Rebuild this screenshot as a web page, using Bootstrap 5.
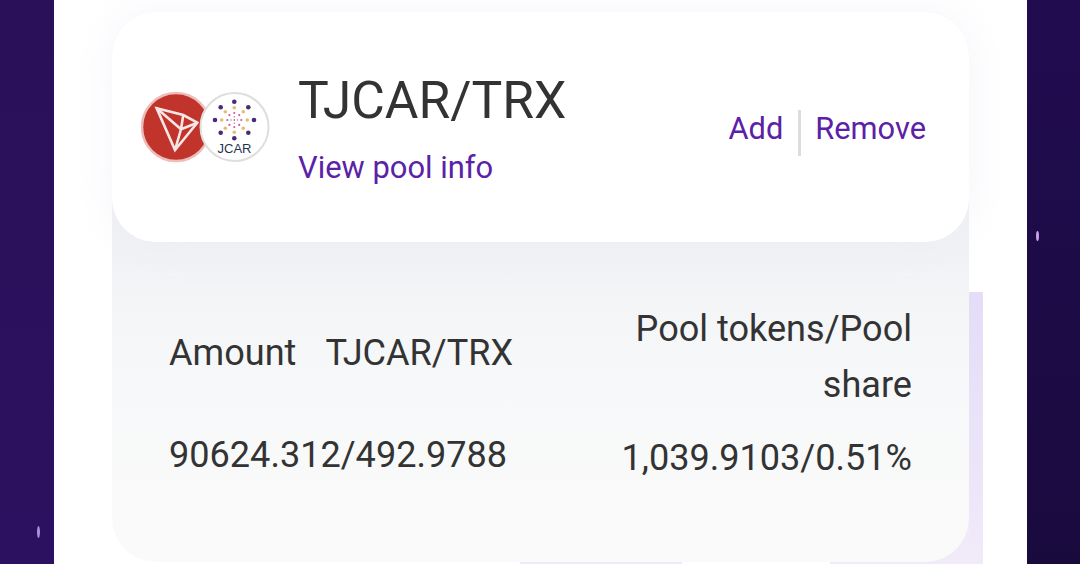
<!DOCTYPE html>
<html lang="en">
<head>
<meta charset="utf-8">
<title>TJCAR/TRX pool</title>
<link href="https://cdn.jsdelivr.net/npm/bootstrap@5.3.0/dist/css/bootstrap.min.css" rel="stylesheet">
<style>
html,body{height:564px;overflow:hidden}
body{font-family:Roboto,sans-serif;background:#fff;color:#333}
.stage{height:564px}
.side-l{width:54px;background:linear-gradient(180deg,#2a1059,#2c1160);position:relative;flex:none}
.side-r{width:53px;background:linear-gradient(180deg,#210c50,#190a3e);position:relative;flex:none}
.spark{position:absolute;width:3px;border-radius:50%;background:#a98fe0}
.spark-a{left:37px;top:526px;height:12px}
.spark-b{left:9px;top:231px;height:10px;background:#c9a0e6}
.panel{width:973px;flex:none;position:relative;background:#fff;padding:12px 58px 0}
.strip{position:absolute}
.strip-a{left:915px;top:292px;width:14px;height:272px;background:linear-gradient(180deg,#e5dcf7,#f0eaf9)}
.strip-b{left:466px;top:560px;width:162px;height:4px;background:#efeaf9}
.strip-c{left:776px;top:480px;width:139px;height:84px;background:#f0eaf9}
.pool-card{width:857px;height:550px;position:relative;border-radius:44px;background:linear-gradient(180deg,#f1f2f5 42%,#f7f8f9 66%,#fafafa 100%)}
.pool-head{height:230px;background:#fff;border-radius:44px;padding:0 43px 0 29px;box-shadow:0 0 44px rgba(228,231,242,.4)}
.coins{width:130px;height:72px;flex:none}
.pool-title{font-size:51.6px;line-height:56px;color:#333;font-weight:400;margin:0 0 17px}
.accent{color:#5b21a6;text-decoration:none}
.info-link{font-size:30.900px;line-height:44px}
.head-text{margin-left:27px;margin-top:8px}
.act{font-size:30.800px;line-height:44px}
.act-sep{width:3px;height:46px;background:#dcdcde;margin:8px 14px 0 15px}
.acts{margin-top:3px}
.pool-data{padding:59px 57px 0;font-size:36.100px;color:#333}
.data-row{display:flex;justify-content:space-between;align-items:center}
.lbl-pair{display:flex;gap:29px;line-height:56px}
.lbl-top{margin-bottom:8px}
.right-cell{width:300px;text-align:right;line-height:56px}
.row-2{margin-top:11px}
.row-2 .right-cell{padding-top:6px}
</style>
</head>
<body>
<div class="stage d-flex">
  <div class="side-l"><span class="spark spark-a"></span></div>
  <div class="panel">
    <div class="strip strip-a"></div>
    <div class="strip strip-b"></div>
    <div class="strip strip-c"></div>
    <div class="pool-card">
      <div class="pool-head d-flex align-items-center position-relative">
        <svg class="coins" viewBox="0 0 130 72" aria-label="TRX and JCAR">
          <circle cx="35" cy="36" r="34" fill="#c1342c" stroke="#edbdb9" stroke-width="2.500"/>
          <g fill="none" stroke="#f8e6e4" stroke-width="2.600" stroke-linejoin="miter">
            <path d="M15.700 17.300 L42.300 24 L56.300 31.700 L34 59 Z"/>
            <path d="M15.700 17.300 L40 38.300 L34 59 M40 38.300 L56.300 31.700 M42.300 24 L40 38.300"/>
          </g>
          <circle cx="93.500" cy="36" r="34" fill="#fff" stroke="#dedede" stroke-width="2"/>
          <g fill="#4a2a7a">
            <circle cx="93.300" cy="10.700" r="2.300"/><circle cx="93.300" cy="47.300" r="2.300"/><circle cx="74" cy="29" r="2.300"/><circle cx="113" cy="29" r="2.300"/>
            <circle cx="79.700" cy="16.300" r="2.300"/><circle cx="107.300" cy="16.300" r="2.300"/><circle cx="79.700" cy="41.700" r="2.300"/><circle cx="107.300" cy="41.700" r="2.300"/>
          </g>
          <g fill="#e8bd70">
            <circle cx="93.300" cy="16.700" r="1.800"/><circle cx="93.300" cy="41.300" r="1.800"/><circle cx="80.700" cy="29" r="1.800"/><circle cx="106.300" cy="29" r="1.800"/>
            <circle cx="84.300" cy="20.700" r="1.800"/><circle cx="102.300" cy="20.700" r="1.800"/><circle cx="84.300" cy="37.300" r="1.800"/><circle cx="102.300" cy="37.300" r="1.800"/>
          </g>
          <g fill="#c9609f">
            <circle cx="93.300" cy="22" r="1.100"/><circle cx="93.300" cy="36" r="1.100"/><circle cx="86.300" cy="29" r="1.100"/><circle cx="100.300" cy="29" r="1.100"/>
            <circle cx="88.400" cy="24.100" r="1.100"/><circle cx="98.200" cy="24.100" r="1.100"/><circle cx="88.400" cy="33.900" r="1.100"/><circle cx="98.200" cy="33.900" r="1.100"/>
            <circle cx="90" cy="29" r=".7"/><circle cx="96.600" cy="29" r=".7"/><circle cx="93.300" cy="25.700" r=".7"/><circle cx="93.300" cy="32.300" r=".7"/>
            <circle cx="93.300" cy="29" r=".7" fill="#4a2a7a"/>
          </g>
          <text x="93.500" y="62.300" text-anchor="middle" font-family="Liberation Sans,sans-serif" font-size="13" fill="#1f3550">JCAR</text>
        </svg>
        <div class="head-text">
          <h1 class="pool-title">TJCAR/TRX</h1>
          <a class="accent info-link" href="#">View pool info</a>
        </div>
        <div class="acts d-flex align-items-center ms-auto">
          <a class="accent act" href="#">Add</a>
          <span class="act-sep"></span>
          <a class="accent act" href="#">Remove</a>
        </div>
      </div>
      <div class="pool-data">
        <div class="data-row">
          <div class="lbl-pair lbl-top"><span>Amount</span><span>TJCAR/TRX</span></div>
          <div class="right-cell">Pool tokens/Pool share</div>
        </div>
        <div class="data-row row-2">
          <div class="lbl-pair"><span>90624.312/492.9788</span></div>
          <div class="right-cell">1,039.9103/0.51%</div>
        </div>
      </div>
    </div>
  </div>
  <div class="side-r"><span class="spark spark-b"></span></div>
</div>
<script src="https://cdn.jsdelivr.net/npm/bootstrap@5.3.0/dist/js/bootstrap.bundle.min.js"></script>
</body>
</html>
